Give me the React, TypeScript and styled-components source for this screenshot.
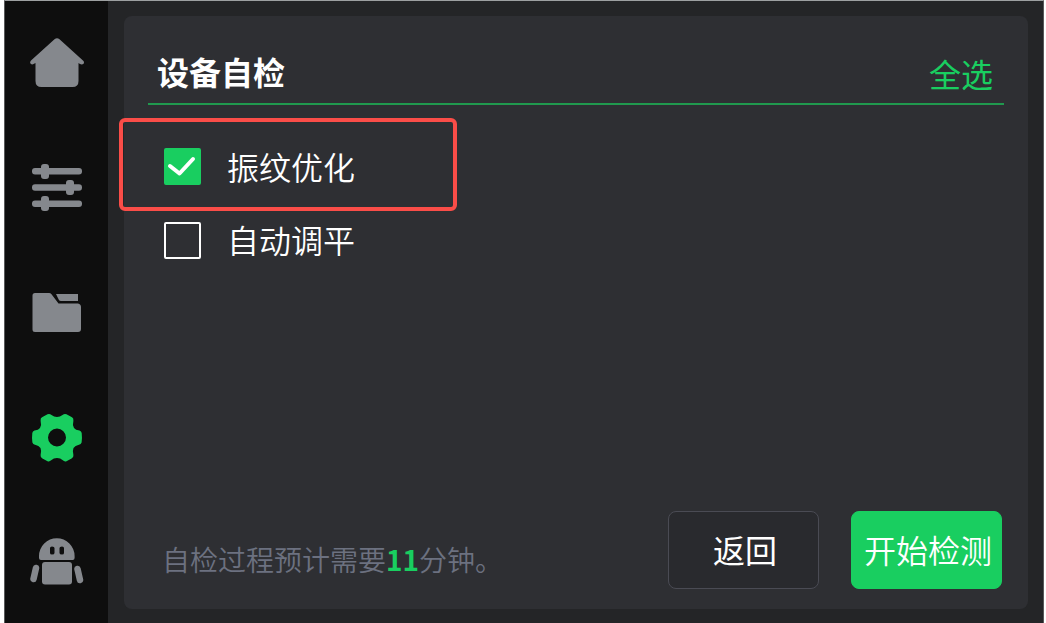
import React, { useState } from "react";
import styled, { createGlobalStyle } from "styled-components";

const GlobalStyle = createGlobalStyle`
  * { box-sizing: border-box; }
  body {
    margin: 0;
    background: #ffffff;
    font-family: "Noto Sans CJK SC", sans-serif;
  }
  button { font-family: inherit; cursor: pointer; }
`;

const Screen = styled.div`
  display: flex;
  min-height: 100vh;
  margin: 0 2px 0 4px;
  border: 1px solid #9da0a1;
  border-left-color: #58595a;
  border-right-color: #58595a;
  border-bottom: 0;
  background: #242527;
`;

const Sidebar = styled.nav`
  flex: 0 0 103px;
  display: flex;
  flex-direction: column;
  justify-content: space-between;
  padding: 32px 0 31px;
  background: #0e0e0e;
`;

const NavButton = styled.button<{ $active?: boolean }>`
  display: flex;
  justify-content: center;
  align-items: center;
  height: 60px;
  padding: 0;
  border: 0;
  background: none;
  color: ${(p) => (p.$active ? "#19ce60" : "#85888d")};

  svg { display: block; fill: currentColor; }
`;

const Content = styled.main`
  flex: 1;
  display: flex;
  padding: 15px 15px 14px 16px;
`;

const Panel = styled.section`
  flex: 1;
  display: flex;
  flex-direction: column;
  padding: 24px 24px 20px;
  border-radius: 8px;
  background: #2e2f33;
`;

const Header = styled.header`
  display: flex;
  justify-content: space-between;
  align-items: center;
  height: 65px;
  padding: 0 11px 2px 9px;
  border-bottom: 2px solid #20994e;
`;

const Title = styled.h1`
  margin: 0;
  font-size: 32px;
  line-height: 48px;
  font-weight: 700;
  color: #ffffff;
`;

const SelectAll = styled.button`
  padding: 4px 0 0;
  border: 0;
  background: none;
  font-size: 32px;
  line-height: 48px;
  color: #19ce60;
`;

const Options = styled.div`
  display: flex;
  flex-direction: column;
  align-items: flex-start;
  margin: 13px 0 0 -29px;
`;

const Option = styled.label<{ $marked?: boolean }>`
  display: flex;
  align-items: center;
  gap: 26px;
  width: 338px;
  height: ${(p) => (p.$marked ? "93px" : "58px")};
  padding: ${(p) => (p.$marked ? "4px 0 0 41px" : "0 0 0 41px")};
  border: 4px solid ${(p) => (p.$marked ? "#fa4d48" : "transparent")};
  border-radius: 6px;
  font-size: 32px;
  line-height: 48px;
  font-weight: 350;
  color: #ffffff;
  cursor: pointer;
`;

const OptionText = styled.span`
  padding-bottom: 2px;
`;

const Tick = styled.input`
  appearance: none;
  flex: none;
  width: 37px;
  height: 37px;
  margin: 0;
  border: 2px solid #ffffff;
  border-radius: 2px;

  &:checked {
    border-color: #19ce60;
    background: #19ce60;
  }
`;

const TickBox = styled.span`
  display: grid;
  flex: none;

  > * { grid-area: 1 / 1; }
  > svg { pointer-events: none; }
`;

const Footer = styled.footer`
  display: flex;
  align-items: center;
  gap: 32px;
  margin-top: auto;
  padding: 0 2px 0 14px;
`;

const Estimate = styled.p`
  flex: 1;
  margin: 0;
  padding-top: 17px;
  font-size: 28px;
  line-height: 40px;
  font-weight: 350;
  color: #6c7180;

  strong { font-weight: 700; color: #19ce60; }
`;

const ActionButton = styled.button<{ $primary?: boolean }>`
  width: 151px;
  height: 78px;
  padding: 0 0 2px 3px;
  border: 1px solid ${(p) => (p.$primary ? "#19ce60" : "#4a4b54")};
  border-radius: 8px;
  background: ${(p) => (p.$primary ? "#19ce60" : "#292a2e")};
  font-size: 32px;
  line-height: 48px;
  font-weight: ${(p) => (p.$primary ? 350 : 400)};
  white-space: nowrap;
  color: #ffffff;
`;

const HomeIcon = () => (
  <svg width="56" height="50" viewBox="0 0 56 50">
    <path d="M25.500 1.200Q28 -.8 30.500 1.200L54.500 23Q55.500 24.500 54.500 25.800Q53 27 51 26L49.500 25V43Q49.500 49 43.500 49H12.500Q6.500 49 6.500 43V25L4 26.300Q2 26.800 1.300 25.300Q.8 24 2 22.500Z" />
  </svg>
);

const SlidersIcon = () => (
  <svg width="50" height="48" viewBox="0 0 50 48">
    <rect y="4" width="50" height="6.500" rx="3" />
    <rect y="20.300" width="50" height="6.500" rx="3" />
    <rect y="36.500" width="50" height="6.500" rx="3" />
    <rect x="9" width="8" height="15" rx="3" />
    <rect x="34" y="16" width="8" height="15" rx="3" />
    <rect x="9" y="32" width="8" height="15" rx="3" />
  </svg>
);

const FolderIcon = () => (
  <svg width="50" height="40" viewBox="0 0 50 40">
    <path d="M3 0H17Q18.500 0 19.500 1.200L26.500 10.500H46Q49 11 49 14V36Q49 39 46 39H3Q.5 39 .5 36.500V2.500Q.5 0 3 0Z" />
    <path d="M24 1H46V8H29Q27.500 8 26.800 6.800Z" />
  </svg>
);

const GearIcon = () => (
  <svg width="52" height="50" viewBox="0 -1 52 50">
    <path
      fillRule="evenodd"
      d="M16.500 1.300Q18.500 .3 20.500 2Q23 4 26 4Q29 4 31.500 2Q33.500 .3 35.500 1.300L41 4.300Q42.700 5.300 42.400 7.700Q41.200 12 43 15Q44.500 17.300 48.500 17.500Q50.400 18 50.700 20Q51.300 25 50.600 29.500Q50 31.500 48 31.800Q44 32.500 42.500 35Q41.200 38 42.400 42Q42.700 44 41 45.200L35.500 48.200Q33.500 49 31.800 47.300Q29.500 45 26 45Q22.500 45 20.200 47.300Q18.500 49 16.500 48.200L11 45.200Q9.300 44 9.600 42Q10.800 38 9.500 35Q8 32.500 4 31.800Q2 31.500 1.400 29.500Q.7 25 1.300 20Q1.600 18 3.500 17.500Q7.500 17.300 9 15Q10.800 12 9.600 7.700Q9.300 5.300 11 4.300ZM26 15.500A9 9 0 1 0 26 33.500A9 9 0 1 0 26 15.500Z"
    />
  </svg>
);

const RobotIcon = () => (
  <svg width="54" height="48" viewBox="0 0 54 48">
    <path
      fillRule="evenodd"
      d="M9 20V18A17.800 17.800 0 0 1 44.600 18V20Q44.600 22 42.600 22H11Q9 22 9 20ZM22 8.500Q20 8.500 20 10V15Q20 16.500 22 16.500Q24.500 16.500 24.500 15V10Q24.500 8.500 22 8.500ZM32 8.500Q29.500 8.500 29.500 10V15Q29.500 16.500 32 16.500Q34 16.500 34 15V10Q34 8.500 32 8.500Z"
    />
    <rect x="12" y="24" width="30" height="22.500" rx="3" />
    <path d="M6 30L3.500 41M47.500 31L50 42" fill="none" stroke="currentColor" strokeWidth="6.500" strokeLinecap="round" />
  </svg>
);

const CheckMark = () => (
  <svg width="37" height="37" viewBox="0 0 37 37">
    <path d="M6 18L15.500 25.500L29 11" fill="none" stroke="#ffffff" strokeWidth="4" strokeLinecap="round" strokeLinejoin="round" />
  </svg>
);

const NAV = [
  { label: "主页", Icon: HomeIcon },
  { label: "调整", Icon: SlidersIcon },
  { label: "文件", Icon: FolderIcon },
  { label: "设置", Icon: GearIcon, active: true },
  { label: "助手", Icon: RobotIcon },
];

const CHECKS = [
  { id: "vibration", label: "振纹优化", marked: true },
  { id: "leveling", label: "自动调平" },
];

export default function App() {
  const [selected, setSelected] = useState<string[]>(["vibration"]);

  const toggle = (id: string) =>
    setSelected((s) => (s.includes(id) ? s.filter((x) => x !== id) : [...s, id]));

  return (
    <>
      <GlobalStyle />
      <Screen>
        <Sidebar>
          {NAV.map(({ label, Icon, active }) => (
            <NavButton key={label} aria-label={label} $active={active}>
              <Icon />
            </NavButton>
          ))}
        </Sidebar>
        <Content>
          <Panel>
            <Header>
              <Title>设备自检</Title>
              <SelectAll onClick={() => setSelected(CHECKS.map((c) => c.id))}>全选</SelectAll>
            </Header>
            <Options>
              {CHECKS.map(({ id, label, marked }) => (
                <Option key={id} htmlFor={id} $marked={marked}>
                  <TickBox>
                    <Tick id={id} type="checkbox" checked={selected.includes(id)} onChange={() => toggle(id)} />
                    {selected.includes(id) && <CheckMark />}
                  </TickBox>
                  <OptionText>{label}</OptionText>
                </Option>
              ))}
            </Options>
            <Footer>
              <Estimate>
                自检过程预计需要<strong>11</strong>分钟。
              </Estimate>
              <ActionButton>返回</ActionButton>
              <ActionButton $primary>开始检测</ActionButton>
            </Footer>
          </Panel>
        </Content>
      </Screen>
    </>
  );
}
